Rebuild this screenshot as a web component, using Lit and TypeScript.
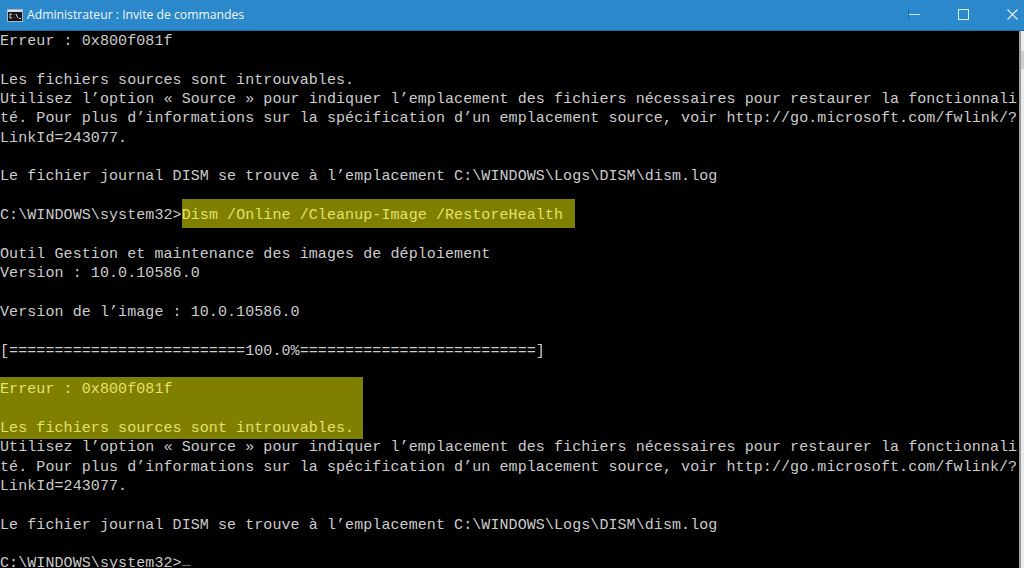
import { LitElement, html, css } from "lit";
import { customElement } from "lit/decorators.js";

const BODY1 = [
  "Utilisez l’option « Source » pour indiquer l’emplacement des fichiers nécessaires pour restaurer la fonctionnali",
  "té. Pour plus d’informations sur la spécification d’un emplacement source, voir http://go.microsoft.com/fwlink/?",
  "LinkId=243077.",
  "",
  "Le fichier journal DISM se trouve à l’emplacement C:\\WINDOWS\\Logs\\DISM\\dism.log",
  "",
];

@customElement("app-root")
export class AppRoot extends LitElement {
  static styles = css`
    :host { display: block; width: 1024px; height: 568px; overflow: hidden; background: #000; }
    .titlebar { height: 31px; box-sizing: border-box; background: #2b88cb; border-bottom: 1px solid #1f6ba3;
      display: flex; align-items: center; color: #f0f7fc; overflow: hidden;
      font: 12.2px "Open Sans", "Noto Sans", sans-serif; }
    .appicon { margin-left: 7px; margin-right: 4px; flex: none; display: block; }
    .title { flex: 1; white-space: nowrap; position: relative; top: -1px; }
    .ctl { width: 49px; height: 30px; flex: none; display: flex; align-items: center; justify-content: center; }
    .ctl svg { display: block; }
    .ctl.last { margin-right: -13px; }
    .body { display: flex; height: 537px; }
    .console { flex: 1; min-width: 0; overflow: hidden; color: #cccccc; padding-top: 1px;
      font: 15px/19.35px "Liberation Mono", monospace; letter-spacing: 0.08px; }
    .line { height: 19.35px; white-space: pre; }
    .hlblock { width: 363px; background: #808000; color: #e2e26e;
      margin: -3.6px 0 -0.8px; padding: 3.6px 0 0.8px; }
    .cmd { background: #808000; color: #e2e26e; padding: 8px 12px 4px 0; }
    .cursor { position: relative; top: -3px; }
    .bar { width: 5px; flex: none; background: #ececec; border-left: 2px solid #9c9c9c; box-sizing: border-box; display: flex; flex-direction: column; }
    .thumb { margin-top: 20px; height: 18px; background: #cdcdcd; }
  `;

  private line(t: string) {
    return html`<div class="line">${t}</div>`;
  }

  render() {
    return html`
      <div class="titlebar">
        <svg class="appicon" width="16" height="13" viewBox="0 0 16 13">
          <rect x="0.5" y="0.5" width="15" height="12" fill="#151515" stroke="#aab8c2"/>
          <rect x="1" y="1" width="14" height="2" fill="#d9dfe4"/>
          <path d="M5 5H3v4h2M7 5.5v.5M7 8v.5M9 5l2 4M12 9.5h2" fill="none" stroke="#e6e6e6"/>
        </svg>
        <span class="title">Administrateur : Invite de commandes</span>
        <div class="ctl"><svg width="14" height="12" viewBox="0 0 14 12"><path d="M0.5 0v11" stroke="#1f6ba3"/><path d="M1 5.5h11" stroke="#cfe3f3"/></svg></div>
        <div class="ctl"><svg width="12" height="12" viewBox="0 0 12 12"><rect x="0.5" y="0.5" width="10" height="10" fill="none" stroke="#dcebf6"/></svg></div>
        <div class="ctl last"><svg width="12" height="12" viewBox="0 0 12 12"><path d="M0.5 0.5l10 10M10.5 0.5L0.5 10.5" stroke="#e6f0f8" stroke-width="1.1"/></svg></div>
      </div>
      <div class="body">
        <div class="console">
          ${this.line("Erreur : 0x800f081f")}
          ${this.line("")}
          ${this.line("Les fichiers sources sont introuvables.")}
          ${BODY1.map((t) => this.line(t))}
          <div class="line">C:\\WINDOWS\\system32&gt;<span class="cmd">Dism /Online /Cleanup-Image /RestoreHealth</span></div>
          ${this.line("")}
          ${this.line("Outil Gestion et maintenance des images de déploiement")}
          ${this.line("Version : 10.0.10586.0")}
          ${this.line("")}
          ${this.line("Version de l’image : 10.0.10586.0")}
          ${this.line("")}
          ${this.line("[==========================100.0%==========================]")}
          ${this.line("")}
          <div class="hlblock">
            ${this.line("Erreur : 0x800f081f")}
            ${this.line("")}
            ${this.line("Les fichiers sources sont introuvables.")}
          </div>
          ${BODY1.map((t) => this.line(t))}
          <div class="line">C:\\WINDOWS\\system32&gt;<span class="cursor">_</span></div>
        </div>
        <div class="bar"><div class="thumb"></div></div>
      </div>
    `;
  }
}
